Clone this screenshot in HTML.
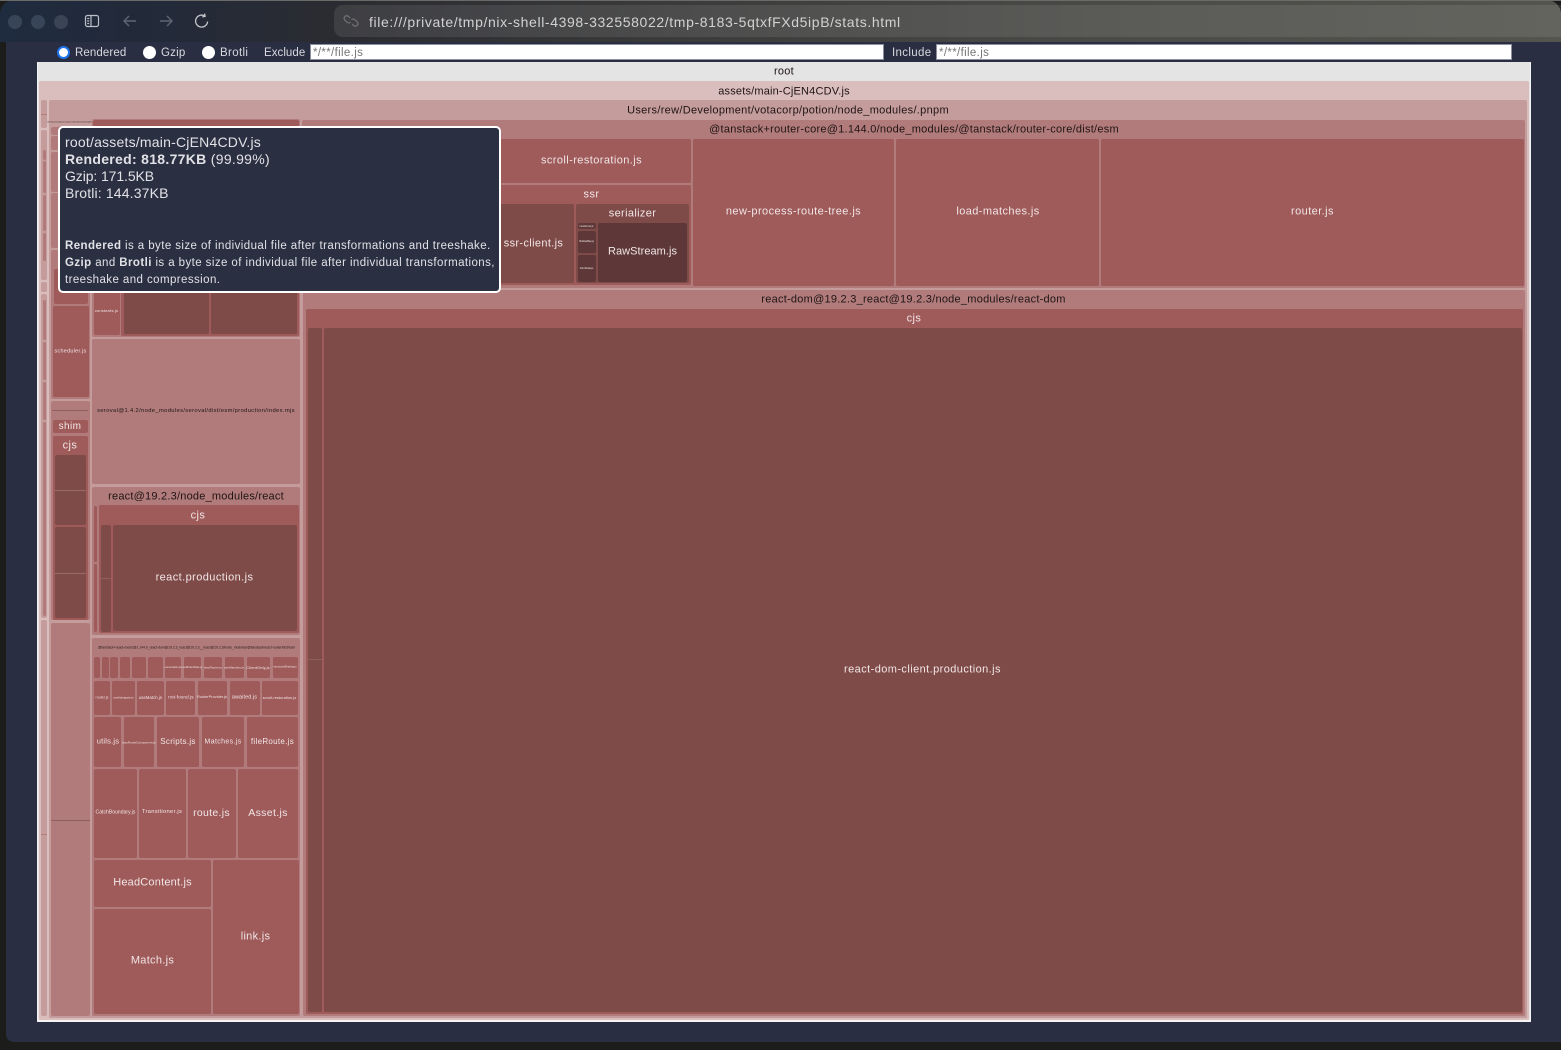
<!DOCTYPE html>
<html><head><meta charset="utf-8"><title>stats</title>
<style>
html,body{margin:0;padding:0;width:1561px;height:1050px;overflow:hidden;background:#1c1c1b;font-family:"Liberation Sans",sans-serif}
body{filter:blur(.3px)}
div,span,svg,input{position:absolute;box-sizing:border-box}
.r{border-radius:2px}
.a{background:#dabdbd}.u{background:#c59c9c}.c{background:#b17b7b}.d{background:#9f5a5a}.e{background:#7f4b49}.f{background:#5e3838}
.t{transform:translate(-50%,-50%);margin-top:1px;white-space:nowrap;color:#f1e6e6;letter-spacing:.42px;line-height:1}
.k{color:#1f1414;letter-spacing:.25px}
.lab{color:#d8d9de;font-size:11.5px;letter-spacing:.35px;top:47px;line-height:13px;white-space:nowrap}
.rad{width:13px;height:13px;border-radius:50%;background:#fff;top:45.5px}
input{border:1px solid #8d8f9c;background:#fff;height:16px;top:44px;font:11.5px "Liberation Sans",sans-serif;letter-spacing:.35px;padding:2px 2px 0;outline:0;border-radius:0}
input::placeholder{color:#777;opacity:1}
.tip{left:58px;top:126px;width:443px;height:167px;background:#2b2f42;border:2px solid #fff;border-radius:5px;color:#e1e2e6;z-index:9}
.tl{left:5px;white-space:nowrap;line-height:17px}
.tl b{font-weight:700}
.big{font-size:14px;letter-spacing:.28px}
.sm{font-size:11.5px;letter-spacing:.42px}
.ln{height:1px;background:#7f4b49}
</style></head><body>

<!-- window chrome -->
<div style="left:0;top:0;width:1561px;height:42px;background:linear-gradient(90deg,#1f2b3e 0,#232a39 170px,#2b2c31 340px,#3c3c3c 700px,#4a4a47 1100px,#55554f 1561px);border-radius:14px 14px 0 0"></div>
<div style="left:0;top:0;width:1561px;height:1px;background:#6a6a68"></div>
<div style="left:334px;top:5px;width:1227px;height:32px;background:rgba(255,255,255,.09);border-radius:9px 0 0 9px"></div>
<div style="left:8px;top:14.5px;width:14px;height:14px;border-radius:50%;background:#384558"></div>
<div style="left:31px;top:14.5px;width:14px;height:14px;border-radius:50%;background:#384558"></div>
<div style="left:54px;top:14.5px;width:14px;height:14px;border-radius:50%;background:#3a4455"></div>
<svg style="left:84px;top:13px" width="16" height="16" viewBox="0 0 16 16" fill="none" stroke="#bcc0c8" stroke-width="1.2"><rect x="1.5" y="2.5" width="13" height="11" rx="2"/><path d="M7 2.5v11M3.2 5.5h2M3.2 8h2M3.2 10.5h2"/></svg>
<svg style="left:122px;top:14px" width="16" height="14" viewBox="0 0 16 14" fill="none" stroke="#5f6672" stroke-width="1.4"><path d="M14 7H2M7 2L2 7l5 5"/></svg>
<svg style="left:158px;top:14px" width="16" height="14" viewBox="0 0 16 14" fill="none" stroke="#5f6672" stroke-width="1.4"><path d="M2 7h12M9 2l5 5-5 5"/></svg>
<svg style="left:194px;top:13px" width="16" height="16" viewBox="0 0 16 16" fill="none" stroke="#c4c6ca" stroke-width="1.3"><path d="M13.6 8.5A6 6 0 1 1 10.8 3M10.6 .6l.5 2.8-2.8.5"/></svg>
<svg style="left:343px;top:13px" width="16" height="16" viewBox="0 0 16 16" fill="none" stroke="#6e6f72" stroke-width="1.3"><path d="M7 5L5.2 3.2a2.6 2.6 0 0 0-3.6 3.6L4 9.2a2.6 2.6 0 0 0 3.6 0M9 11l1.8 1.8a2.6 2.6 0 0 0 3.6-3.6L12 6.8a2.6 2.6 0 0 0-3.6 0"/></svg>
<span style="left:369px;top:14px;font-size:14px;line-height:16px;letter-spacing:.62px;color:#d2d2d2;white-space:nowrap">file:///private/tmp/nix-shell-4398-332558022/tmp-8183-5qtxfFXd5ipB/stats.html</span>

<!-- page -->
<div style="left:6px;top:42px;width:1555px;height:1000px;background:#2a2e42;border-radius:0 0 0 8px"></div>
<div class="rad" style="left:56.5px;background:#fff;border:2px solid #1f74ea"></div>
<span class="lab" style="left:75px;letter-spacing:.1px">Rendered</span>
<div class="rad" style="left:142.5px"></div>
<span class="lab" style="left:161px;letter-spacing:.2px">Gzip</span>
<div class="rad" style="left:201.5px"></div>
<span class="lab" style="left:220px">Brotli</span>
<span class="lab" style="left:264px;letter-spacing:.05px">Exclude</span>
<input placeholder="*/**/file.js" style="left:310px;width:574px">
<span class="lab" style="left:892px">Include</span>
<input placeholder="*/**/file.js" style="left:936px;width:576px">

<!-- root -->
<div style="left:37px;top:62px;width:1494px;height:960px;background:#e4e4e4;border-right:1px solid #f4f4f4;border-bottom:2px solid #f4f4f4;border-left:1px solid #f4f4f4"></div>
<span class="t k" style="left:784px;top:71px;font-size:11px">root</span>
<div class="a r" style="left:39px;top:81px;width:1490px;height:939px"></div>
<span class="t k" style="left:784px;top:91px;font-size:11px;letter-spacing:.18px">assets/main-CjEN4CDV.js</span>

<!-- left strip -->
<div class="u r" style="left:41px;top:100px;width:6px;height:28px"></div>
<div class="ln" style="left:41px;top:114px;width:6px;background:#b17b7b"></div>
<div class="u r" style="left:41px;top:130px;width:6px;height:150px"></div>
<div class="u r" style="left:41px;top:282px;width:6px;height:10px"></div>
<div class="u r" style="left:41px;top:294px;width:6px;height:324px"></div>
<div class="c r" style="left:42.5px;top:150px;width:3px;height:10px"></div>
<div class="c r" style="left:42.5px;top:161px;width:3px;height:32px"></div>
<div class="c r" style="left:42.5px;top:195px;width:3px;height:36px"></div>
<div class="c r" style="left:42.5px;top:233px;width:3px;height:28px"></div>
<div class="c r" style="left:42.5px;top:300px;width:3px;height:40px"></div>
<div class="c r" style="left:42.5px;top:342px;width:3px;height:38px"></div>
<div class="c r" style="left:42.5px;top:382px;width:3px;height:38px"></div>
<div class="c r" style="left:42.5px;top:422px;width:3px;height:194px"></div>
<div class="u r" style="left:41px;top:620px;width:6px;height:396px"></div>
<div class="ln" style="left:41px;top:834px;width:6px;background:#b17b7b"></div>

<!-- users -->
<div class="u r" style="left:49px;top:100px;width:1478px;height:918px"></div>
<span class="t k" style="left:788px;top:110px;font-size:11px;letter-spacing:.31px">Users/rew/Development/votacorp/potion/node_modules/.pnpm</span>

<!-- first column -->
<span class="t k" style="left:71px;top:122px;font-size:1.5px;letter-spacing:0">@tanstack+history@1.141.0/node_modules/@tanstack/history/dist/esm</span>
<div class="c r" style="left:51px;top:127px;width:39px;height:8px"></div>
<div class="c r" style="left:51px;top:136px;width:39px;height:14px"></div>
<div class="c r" style="left:51px;top:152px;width:39px;height:40px"></div>
<div class="c r" style="left:51px;top:193px;width:39px;height:55px"></div>
<div class="c r" style="left:51px;top:250px;width:39px;height:149px"></div>
<div class="d r" style="left:54px;top:269px;width:34px;height:35px"></div>
<div class="d r" style="left:52.5px;top:306px;width:36px;height:91px"></div>
<span class="t" style="left:70.5px;top:351px;font-size:5.5px;letter-spacing:.25px">scheduler.js</span>

<div class="c r" style="left:51px;top:401px;width:39px;height:219px"></div>
<div class="ln" style="left:52px;top:410px;width:36px;background:#8e5f5d"></div>
<div class="d r" style="left:53px;top:420px;width:35px;height:13px"></div>
<span class="t" style="left:70px;top:425.5px;font-size:10px">shim</span>
<div class="d r" style="left:53px;top:436px;width:35px;height:184px"></div>
<span class="t" style="left:70px;top:445px;font-size:11px">cjs</span>
<div class="e r" style="left:54.5px;top:455px;width:31.5px;height:70px"></div>
<div class="ln" style="left:55px;top:490px;width:31px;background:#986b69"></div>
<div class="e r" style="left:54.5px;top:527px;width:31.5px;height:91px"></div>
<div class="ln" style="left:55px;top:573px;width:31px;background:#986b69"></div>

<div class="c r" style="left:51px;top:623px;width:39px;height:393px"></div>
<div class="ln" style="left:51px;top:819.5px;width:39px;background:#8e5f5d"></div>

<!-- second column -->
<div class="c r" style="left:92px;top:119px;width:208px;height:218px"></div>
<div class="d r" style="left:93px;top:120px;width:206px;height:8px"></div>
<div class="d r" style="left:94px;top:292px;width:25.5px;height:43px"></div>
<span class="t" style="left:106.5px;top:309.5px;font-size:4px;letter-spacing:.2px">constants.js</span>
<div class="d r" style="left:121px;top:285px;width:177.5px;height:50.5px"></div>
<div class="e r" style="left:123.5px;top:285px;width:85.5px;height:48.5px"></div>
<div class="e r" style="left:211px;top:285px;width:86px;height:48.5px"></div>

<div class="c r" style="left:92px;top:339px;width:208px;height:145px"></div>
<span class="t k" style="left:196px;top:410.5px;font-size:5.8px;letter-spacing:.35px">seroval@1.4.2/node_modules/seroval/dist/esm/production/index.mjs</span>

<div class="c r" style="left:92px;top:487px;width:208px;height:148px"></div>
<span class="t k" style="left:196px;top:496px;font-size:11px;letter-spacing:.22px">react@19.2.3/node_modules/react</span>
<div class="d r" style="left:94px;top:506px;width:3px;height:56px"></div>
<div class="d r" style="left:94px;top:564px;width:3px;height:68px"></div>
<div class="d r" style="left:98.5px;top:505px;width:200px;height:128px"></div>
<span class="t" style="left:198px;top:515px;font-size:11px">cjs</span>
<div class="e r" style="left:100.5px;top:525px;width:10.5px;height:107px"></div>
<div class="ln" style="left:100.5px;top:578px;width:10.5px;background:#8f5f5d"></div>
<div class="e r" style="left:113px;top:525px;width:183.5px;height:106px"></div>
<span class="t" style="left:204.5px;top:576.5px;font-size:11px">react.production.js</span>

<div class="c r" style="left:92px;top:638px;width:208px;height:378px"></div>
<span class="t k" style="left:196.5px;top:647px;font-size:3.3px;letter-spacing:.03px">@tanstack+react-router@1.144.0_react-dom@19.2.3_react@19.2.3__react@19.2.3/node_modules/@tanstack/react-router/dist/esm</span>

<div class="d r" style="left:94px;top:657px;width:5.5px;height:21px"></div>
<div class="d r" style="left:101.5px;top:657px;width:7px;height:21px"></div>
<div class="d r" style="left:110px;top:657px;width:8px;height:21px"></div>
<div class="d r" style="left:120px;top:657px;width:10px;height:21px"></div>
<div class="d r" style="left:132px;top:657px;width:13.5px;height:21px"></div>
<div class="d r" style="left:147.5px;top:657px;width:15px;height:21px"></div>
<div class="d r" style="left:165px;top:657px;width:16px;height:21px"></div>
<span class="t" style="left:173px;top:666.5px;font-size:2.5px;letter-spacing:.05px">useLocation.js</span>
<div class="d r" style="left:183.5px;top:657px;width:17.5px;height:21px"></div>
<span class="t" style="left:192px;top:666.5px;font-size:2.5px;letter-spacing:.05px">useRouterState.js</span>
<div class="d r" style="left:203.5px;top:657px;width:18.5px;height:21px"></div>
<span class="t" style="left:213px;top:666.5px;font-size:3px;letter-spacing:.05px">lazyRouter.js</span>
<div class="d r" style="left:224.5px;top:657px;width:19.5px;height:21px"></div>
<span class="t" style="left:234px;top:666.5px;font-size:3px;letter-spacing:.05px">useMatches.js</span>
<div class="d r" style="left:246.5px;top:657px;width:23.5px;height:21px"></div>
<span class="t" style="left:258px;top:667px;font-size:4px;letter-spacing:.1px">ClientOnly.js</span>
<div class="d r" style="left:272.5px;top:657px;width:25.5px;height:21px"></div>
<span class="t" style="left:285px;top:666.5px;font-size:2.6px;letter-spacing:.05px">structuralSharing.js</span>

<div class="d r" style="left:94px;top:681px;width:15.5px;height:33.5px"></div>
<span class="t" style="left:102px;top:697px;font-size:3.5px;letter-spacing:.05px">router.js</span>
<div class="d r" style="left:112px;top:681px;width:22.5px;height:33.5px"></div>
<span class="t" style="left:123.5px;top:696.5px;font-size:3px;letter-spacing:.05px">useNavigate.js</span>
<div class="d r" style="left:137px;top:681px;width:26.5px;height:33.5px"></div>
<span class="t" style="left:150.5px;top:697px;font-size:4.2px;letter-spacing:.08px">useMatch.js</span>
<div class="d r" style="left:166px;top:681px;width:29px;height:33.5px"></div>
<span class="t" style="left:181px;top:697px;font-size:4.6px;letter-spacing:.12px">not-found.js</span>
<div class="d r" style="left:197.5px;top:681px;width:29px;height:33.5px"></div>
<span class="t" style="left:212px;top:697px;font-size:3.8px;letter-spacing:.05px">RouterProvider.js</span>
<div class="d r" style="left:229.5px;top:681px;width:30px;height:33.5px"></div>
<span class="t" style="left:244.5px;top:696.5px;font-size:5.4px;letter-spacing:.12px">awaited.js</span>
<div class="d r" style="left:262px;top:681px;width:35.5px;height:33.5px"></div>
<span class="t" style="left:279.5px;top:696.5px;font-size:3.9px;letter-spacing:.05px">scroll-restoration.js</span>

<div class="d r" style="left:94px;top:717px;width:27px;height:49.5px"></div>
<span class="t" style="left:108px;top:740px;font-size:7.5px;letter-spacing:.2px">utils.js</span>
<div class="d r" style="left:124px;top:717px;width:30px;height:49.5px"></div>
<span class="t" style="left:139px;top:741.5px;font-size:3.1px;letter-spacing:.03px">lazyRouteComponent.js</span>
<div class="d r" style="left:156.5px;top:717px;width:42.5px;height:49.5px"></div>
<span class="t" style="left:178px;top:740.5px;font-size:8px;letter-spacing:.3px">Scripts.js</span>
<div class="d r" style="left:201.5px;top:717px;width:42.5px;height:49.5px"></div>
<span class="t" style="left:223px;top:741px;font-size:7px;letter-spacing:.35px">Matches.js</span>
<div class="d r" style="left:246.5px;top:717px;width:51px;height:49.5px"></div>
<span class="t" style="left:272.5px;top:740.5px;font-size:8px;letter-spacing:.3px">fileRoute.js</span>

<div class="d r" style="left:94px;top:769px;width:43px;height:89px"></div>
<span class="t" style="left:115.5px;top:812px;font-size:5px;letter-spacing:.05px">CatchBoundary.js</span>
<div class="d r" style="left:139px;top:769px;width:47px;height:89px"></div>
<span class="t" style="left:162px;top:811.5px;font-size:5.8px;letter-spacing:.3px">Transitioner.js</span>
<div class="d r" style="left:188px;top:769px;width:47.5px;height:89px"></div>
<span class="t" style="left:211.5px;top:812px;font-size:10.5px;letter-spacing:.3px">route.js</span>
<div class="d r" style="left:238px;top:769px;width:60px;height:89px"></div>
<span class="t" style="left:268px;top:812px;font-size:10.5px;letter-spacing:.35px">Asset.js</span>

<div class="d r" style="left:94px;top:860px;width:117px;height:47px"></div>
<span class="t" style="left:152.5px;top:882px;font-size:11px;letter-spacing:.2px">HeadContent.js</span>
<div class="d r" style="left:94px;top:909px;width:117px;height:105px"></div>
<span class="t" style="left:152.5px;top:959.5px;font-size:11px;letter-spacing:.3px">Match.js</span>
<div class="d r" style="left:213px;top:860px;width:85.5px;height:154px"></div>
<span class="t" style="left:255.5px;top:936px;font-size:11px;letter-spacing:.3px">link.js</span>

<!-- tanstack router core -->
<div class="c r" style="left:302px;top:120px;width:1223px;height:168px"></div>
<span class="t k" style="left:914px;top:129px;font-size:11px">@tanstack+router-core@1.144.0/node_modules/@tanstack/router-core/dist/esm</span>
<div class="d r" style="left:304px;top:139px;width:387px;height:44px"></div>
<span class="t" style="left:591.5px;top:160px;font-size:11px">scroll-restoration.js</span>
<div class="d r" style="left:304px;top:185px;width:387px;height:100px"></div>
<span class="t" style="left:591.5px;top:194px;font-size:11px">ssr</span>
<div class="e r" style="left:306px;top:204px;width:268px;height:79px"></div>
<span class="t" style="left:533.5px;top:243px;font-size:11px;letter-spacing:.35px">ssr-client.js</span>
<div class="e r" style="left:576px;top:204px;width:113px;height:79px"></div>
<span class="t" style="left:632.5px;top:213px;font-size:11px;letter-spacing:.35px">serializer</span>
<div class="f r" style="left:577.5px;top:223px;width:18px;height:6px"></div>
<span class="t" style="left:586.5px;top:225.5px;font-size:2.3px;letter-spacing:0">transformer.js</span>
<div class="f r" style="left:577.5px;top:231px;width:18px;height:22px"></div>
<span class="t" style="left:586.5px;top:241px;font-size:2.3px;letter-spacing:0">ShallowMap.js</span>
<div class="f r" style="left:577.5px;top:255px;width:18px;height:27px"></div>
<span class="t" style="left:586.5px;top:267.5px;font-size:2.5px;letter-spacing:0">FormData.js</span>
<div class="f r" style="left:598px;top:223px;width:89px;height:59px"></div>
<span class="t" style="left:642.5px;top:251px;font-size:11px;letter-spacing:.05px">RawStream.js</span>
<div class="d r" style="left:693px;top:139px;width:201px;height:147px"></div>
<span class="t" style="left:793.5px;top:211px;font-size:11px">new-process-route-tree.js</span>
<div class="d r" style="left:896px;top:139px;width:203px;height:147px"></div>
<span class="t" style="left:998px;top:211px;font-size:11px">load-matches.js</span>
<div class="d r" style="left:1101px;top:139px;width:423px;height:147px"></div>
<span class="t" style="left:1312.5px;top:211px;font-size:11px">router.js</span>

<!-- react dom -->
<div class="c r" style="left:303px;top:290px;width:1222px;height:726px"></div>
<span class="t k" style="left:913.5px;top:299px;font-size:11px">react-dom@19.2.3_react@19.2.3/node_modules/react-dom</span>
<div class="d r" style="left:306px;top:309px;width:1217px;height:705px"></div>
<span class="t" style="left:914px;top:318px;font-size:11px">cjs</span>
<div class="e r" style="left:308px;top:328px;width:14px;height:684px"></div>
<div class="ln" style="left:308px;top:659px;width:14px;background:#8f5f5d"></div>
<div class="e r" style="left:324px;top:328px;width:1197.5px;height:684px"></div>
<span class="t" style="left:922.5px;top:669px;font-size:11px">react-dom-client.production.js</span>

<!-- tooltip -->
<div class="tip">
<span class="tl big" style="top:6px;letter-spacing:.21px">root/assets/main-CjEN4CDV.js</span>
<span class="tl big" style="top:23px;letter-spacing:.3px"><b>Rendered: 818.77KB</b> (99.99%)</span>
<span class="tl big" style="top:40px;letter-spacing:-.1px">Gzip: 171.5KB</span>
<span class="tl big" style="top:57px;letter-spacing:.15px">Brotli: 144.37KB</span>
<span class="tl sm" style="top:110px"><b>Rendered</b> is a byte size of individual file after transformations and treeshake.</span>
<span class="tl sm" style="top:127px"><b>Gzip</b> and <b>Brotli</b> is a byte size of individual file after individual transformations,</span>
<span class="tl sm" style="top:144px">treeshake and compression.</span>
</div>
</body></html>
